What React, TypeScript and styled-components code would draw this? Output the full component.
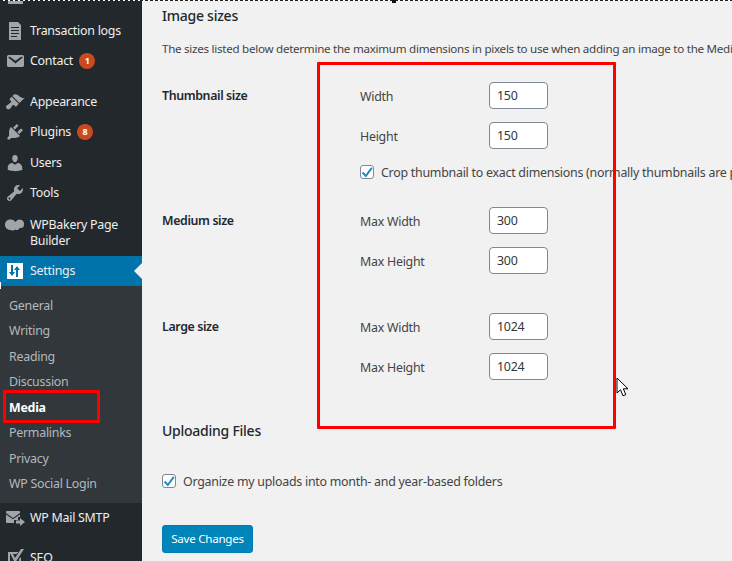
import React from "react";
import styled, { createGlobalStyle } from "styled-components";

const GlobalStyle = createGlobalStyle`
  html, body {
    margin: 0;
    padding: 0;
    height: 100%;
    overflow: hidden;
    background: #f1f1f1;
  }
  * {
    box-sizing: border-box;
  }
`;

const FONT = `"Noto Sans", "Open Sans", Arial, sans-serif`;

const Page = styled.div`
  position: relative;
  display: flex;
  width: 732px;
  height: 561px;
  overflow: hidden;
  font-family: ${FONT};
  font-size: 12.4px;
  letter-spacing: -0.25px;
  color: #444;
`;

const Sidebar = styled.nav`
  flex: 0 0 142px;
  background: #23282d;
  height: 561px;
  overflow: hidden;
`;

const MenuList = styled.div`
  margin-top: -17px;
`;

const MenuItem = styled.div<{ $active?: boolean; $gapTop?: number; $tall?: boolean; $clipped?: boolean }>`
  position: relative;
  display: flex;
  align-items: ${(p) => (p.$tall ? "flex-start" : "center")};
  gap: 5px;
  height: ${(p) => (p.$tall ? "47px" : p.$clipped ? "32.6px" : "30.6px")};
  margin-top: ${(p) => p.$gapTop ?? 0}px;
  padding: ${(p) => (p.$tall ? 8 : 0)}px 0 ${(p) => (p.$clipped ? 4 : 0)}px 5px;
  color: #eee;
  line-height: 16px;
  background: ${(p) => (p.$active ? "#0073aa" : "transparent")};
  svg {
    flex: 0 0 20px;
    fill: ${(p) => (p.$active ? "#fff" : "#a0a5aa")};
  }
`;

const MenuLabel = styled.span`
  white-space: nowrap;
`;

const Badge = styled.span`
  display: inline-flex;
  align-items: center;
  justify-content: center;
  width: 16px;
  height: 16px;
  margin-left: 6px;
  border-radius: 50%;
  background: #ca4a1f;
  color: #fff;
  font-size: 9px;
  font-weight: 700;
  vertical-align: 1px;
`;

const ActiveArrow = styled.span`
  position: absolute;
  right: 0;
  top: 50%;
  margin-top: -8px;
  border: 8px solid transparent;
  border-left-width: 0;
  border-right-color: #f1f1f1;
`;

const SubMenu = styled.div`
  background: #32373c;
  padding: 6.300px 0;
`;

const SubItem = styled.div<{ $current?: boolean }>`
  display: flex;
  align-items: center;
  height: 25.5px;
  padding-left: 9px;
  white-space: nowrap;
  color: ${(p) => (p.$current ? "#fff" : "#b4b9be")};
  font-weight: ${(p) => (p.$current ? 700 : 400)};
`;

const Main = styled.main`
  flex: 1;
  min-width: 0;
  padding: 6px 0 0 20px;
`;

const Heading = styled.h2<{ $top?: number }>`
  margin: ${(p) => p.$top ?? 0}px 0 0;
  color: #23282d;
  font-size: 14px;
  font-weight: 500;
  line-height: 20px;
`;

const Description = styled.p`
  margin: 14px 0 0;
  font-size: 11.6px;
  letter-spacing: -0.27px;
  line-height: 18px;
  white-space: nowrap;
`;

const SizeGroup = styled.section<{ $top: number }>`
  display: grid;
  grid-template-columns: 198px 1fr;
  margin-top: ${(p) => p.$top}px;
`;

const GroupTitle = styled.div`
  color: #23282d;
  font-weight: 600;
  letter-spacing: -0.38px;
  line-height: 27px;
`;

const Fields = styled.div`
  display: flex;
  flex-direction: column;
  gap: 13px;
`;

const FieldRow = styled.label`
  display: flex;
  align-items: center;
  height: 27px;
`;

const FieldName = styled.span`
  flex: 0 0 129px;
  padding-top: 1px;
`;

const NumberInput = styled.input`
  width: 59px;
  height: 27px;
  padding: 0 7px;
  border: 1px solid #7e8993;
  border-radius: 4px;
  background: #fff;
  color: #32373c;
  font: inherit;
  letter-spacing: inherit;
  outline: none;
`;

const CheckRow = styled.div<{ $top?: number }>`
  display: flex;
  align-items: center;
  gap: 7px;
  margin-top: ${(p) => p.$top ?? 0}px;
  height: 20px;
  white-space: nowrap;
`;

const CheckBox = styled.span`
  display: flex;
  align-items: center;
  justify-content: center;
  flex: 0 0 14px;
  width: 14px;
  height: 14px;
  border: 1px solid #7e8993;
  border-radius: 3px;
  background: #fff;
`;

const SaveButton = styled.button`
  display: block;
  width: 91px;
  height: 28px;
  margin-top: 34px;
  padding: 0 0 2px;
  border: 1px solid #007cb2;
  border-radius: 3px;
  background: #0085ba;
  color: #fff;
  font: inherit;
  font-size: 11.6px;
  letter-spacing: -0.25px;
`;

const Annotation = styled.div<{ $x: number; $y: number; $w: number; $h: number }>`
  position: absolute;
  left: ${(p) => p.$x}px;
  top: ${(p) => p.$y}px;
  width: ${(p) => p.$w}px;
  height: ${(p) => p.$h}px;
  border: 3px solid #f00;
  border-radius: 1px;
  pointer-events: none;
`;

const MarqueeTop = styled.div`
  position: absolute;
  left: 0;
  top: 0;
  width: 100%;
  height: 1px;
  background: repeating-linear-gradient(90deg, #222 0 3px, #fff 3px 5px);
`;

const MarqueeHandle = styled.div`
  position: absolute;
  left: 392px;
  top: 0;
  width: 4px;
  height: 3px;
  background: #111;
`;

const MarqueeSide = styled.div`
  position: absolute;
  left: 0;
  top: 282px;
  width: 1px;
  height: 7px;
  background: #fff;
`;

const Cursor = styled.svg`
  position: absolute;
  left: 616px;
  top: 377px;
`;

const Dash = ({ d }: { d: string }) => (
  <svg width="20" height="20" viewBox="0 0 20 20">
    <path d={d} />
  </svg>
);

const ICONS = {
  page: "M4 1h9l3 3v15H4zM6 6v1h8V6zm0 3v1h8V9zm0 3v1h8v-1zm0 3v1h6v-1z",
  mail: "M3.87 4h13.25C18.37 4 19 4.59 19 5.79v8.42c0 1.19-.63 1.79-1.88 1.79H3.87c-1.25 0-1.88-.6-1.88-1.79V5.79c0-1.2.63-1.79 1.88-1.79zm6.62 8.6l6.74-5.53c.24-.2.43-.66.13-1.07-.29-.41-.82-.42-1.17-.17l-5.7 3.86L4.8 5.83c-.35-.25-.88-.24-1.17.17-.3.41-.11.87.13 1.07z",
  brush: "M14.48 11.06L7.41 3.99l1.5-1.5c.5-.56 2.3-.47 3.51.32 1.21.8 1.43 1.28 2.91 2.1 1.18.64 2.45 1.26 4.45.85zm-.71.71L6.7 4.7 4.93 6.47c-.39.39-.39 1.02 0 1.41l1.06 1.06c.39.39.39 1.03 0 1.42-.6.6-1.43 1.11-2.21 1.69-.35.26-.7.53-1.01.84C1.43 13.23 1 14.11 1 15c0 .89.43 1.77 1.77 2.23.89.3 1.77-.13 2.42-.78.31-.31.58-.66.84-1.01.58-.78 1.09-1.61 1.69-2.21.39-.39 1.03-.39 1.42 0l1.06 1.06c.39.39 1.02.39 1.41 0z",
  plug: "M13.11 4.36L9.87 7.6 8 5.73l3.24-3.24c.35-.34 1.05-.2 1.56.32.52.51.66 1.21.31 1.55zm-8 1.77l.91-1.12 9.01 9.01-1.19.84c-.71.71-2.63 1.16-3.82 1.16H6.14L4.9 17.26c-.59.59-1.54.59-2.12 0-.59-.58-.59-1.53 0-2.12l1.24-1.24v-3.88c0-1.13.4-3.19 1.09-3.89zm7.26 3.97l3.24-3.24c.34-.35 1.04-.21 1.55.31.52.51.66 1.21.31 1.55l-3.24 3.25z",
  user: "M10 9.25c-2.27 0-2.73-3.44-2.73-3.44C7 4.02 7.82 2 9.97 2c2.16 0 2.98 2.02 2.71 3.81 0 0-.41 3.44-2.68 3.44zm0 2.57L12.72 10c2.39 0 4.52 2.33 4.52 4.53v2.49s-3.65 1.13-7.24 1.13c-3.65 0-7.24-1.13-7.24-1.13v-2.49c0-2.25 1.94-4.48 4.47-4.48z",
  wrench: "M16.68 9.77c-1.34 1.34-3.3 1.67-4.95.99l-5.41 6.52c-.99.99-2.59.99-3.58 0s-.99-2.59 0-3.57l6.52-5.42c-.68-1.65-.35-3.61.99-4.95 1.28-1.28 3.12-1.62 4.72-1.06l-2.89 2.89 2.82 2.82 2.86-2.87c.53 1.58.18 3.39-1.08 4.65zM3.81 16.21c.4.39 1.04.39 1.43 0 .4-.4.4-1.04 0-1.43-.39-.4-1.03-.4-1.43 0-.39.39-.39 1.03 0 1.43z",
  cloud: "M5.500 2.500a5 5 0 0 1 5 2.500a4.500 4.500 0 0 1 8.500 2.500a3.500 3.500 0 0 1-3.500 3.500h-1a2.500 2.500 0 0 1-4 1.500a4 4 0 0 1-4.500.5C3 13 0 11 0 8a5 5 0 0 1 5.500-5.500z",
  settings: "M2 2h16v16H2zm4 2v7H4l3 4 3-4H8V4zm7 12v-7h2l-3-4-3 4h2v7z",
  smtp: "M2 3h12c.8 0 1 .5 1 1v1L8 10 1 5V4c0-.5.3-1 1-1zm-1 3.500l7 4.800 7-4.800V9h-2v3H9v3H2c-.7 0-1-.5-1-1zM15 10l5 4-5 4v-2.500h-4v-3h4z",
  seo: "M3 4h10.500l-2 2H5v9h9v-4l2-2v8H3zm5 2l2 4 6-9h3l-9 14-4.500-9z",
};

const Checkmark = () => (
  <svg width="12" height="12" viewBox="0 0 12 12">
    <path d="M1.500 6.500 4.800 10 10.800 1.800" fill="none" stroke="#1e8cbe" strokeWidth="2" />
  </svg>
);

const SUB_ITEMS = ["General", "Writing", "Reading", "Discussion", "Media", "Permalinks", "Privacy", "WP Social Login"];

const App: React.FC = () => {
  return (
    <>
      <GlobalStyle />
      <Page>
        <Sidebar>
          <MenuList>
            <MenuItem $clipped>
              <Dash d="M2 3h17v4H2zm1 6h15v8H3z" />
              <MenuLabel>Invoices</MenuLabel>
            </MenuItem>
            <MenuItem>
              <Dash d={ICONS.page} />
              <MenuLabel>Transaction logs</MenuLabel>
            </MenuItem>
            <MenuItem>
              <Dash d={ICONS.mail} />
              <MenuLabel>
                Contact<Badge>1</Badge>
              </MenuLabel>
            </MenuItem>
            <MenuItem $gapTop={9.6}>
              <Dash d={ICONS.brush} />
              <MenuLabel>Appearance</MenuLabel>
            </MenuItem>
            <MenuItem>
              <Dash d={ICONS.plug} />
              <MenuLabel>
                Plugins<Badge>8</Badge>
              </MenuLabel>
            </MenuItem>
            <MenuItem>
              <Dash d={ICONS.user} />
              <MenuLabel>Users</MenuLabel>
            </MenuItem>
            <MenuItem>
              <Dash d={ICONS.wrench} />
              <MenuLabel>Tools</MenuLabel>
            </MenuItem>
            <MenuItem $tall>
              <Dash d={ICONS.cloud} />
              <MenuLabel>
                WPBakery Page
                <br />
                Builder
              </MenuLabel>
            </MenuItem>
            <MenuItem $active>
              <Dash d={ICONS.settings} />
              <MenuLabel>Settings</MenuLabel>
              <ActiveArrow />
            </MenuItem>
            <SubMenu>
              {SUB_ITEMS.map((item) => (
                <SubItem key={item} $current={item === "Media"}>
                  {item}
                </SubItem>
              ))}
            </SubMenu>
            <MenuItem>
              <Dash d={ICONS.smtp} />
              <MenuLabel>WP Mail SMTP</MenuLabel>
            </MenuItem>
            <MenuItem $gapTop={9.4}>
              <Dash d={ICONS.seo} />
              <MenuLabel>SEO</MenuLabel>
            </MenuItem>
          </MenuList>
        </Sidebar>

        <Main>
          <Heading>Image sizes</Heading>
          <Description>
            The sizes listed below determine the maximum dimensions in pixels to use when adding an image to the Media
            Library.
          </Description>

          <SizeGroup $top={24}>
            <GroupTitle>Thumbnail size</GroupTitle>
            <Fields>
              <FieldRow>
                <FieldName>Width</FieldName>
                <NumberInput defaultValue="150" />
              </FieldRow>
              <FieldRow>
                <FieldName>Height</FieldName>
                <NumberInput defaultValue="150" />
              </FieldRow>
              <CheckRow>
                <CheckBox>
                  <Checkmark />
                </CheckBox>
                Crop thumbnail to exact dimensions (normally thumbnails are proportional)
              </CheckRow>
            </Fields>
          </SizeGroup>

          <SizeGroup $top={25}>
            <GroupTitle>Medium size</GroupTitle>
            <Fields>
              <FieldRow>
                <FieldName>Max Width</FieldName>
                <NumberInput defaultValue="300" />
              </FieldRow>
              <FieldRow>
                <FieldName>Max Height</FieldName>
                <NumberInput defaultValue="300" />
              </FieldRow>
            </Fields>
          </SizeGroup>

          <SizeGroup $top={39}>
            <GroupTitle>Large size</GroupTitle>
            <Fields>
              <FieldRow>
                <FieldName>Max Width</FieldName>
                <NumberInput defaultValue="1024" />
              </FieldRow>
              <FieldRow>
                <FieldName>Max Height</FieldName>
                <NumberInput defaultValue="1024" />
              </FieldRow>
            </Fields>
          </SizeGroup>

          <Heading $top={41}>Uploading Files</Heading>
          <CheckRow $top={30}>
            <CheckBox>
              <Checkmark />
            </CheckBox>
            Organize my uploads into month- and year-based folders
          </CheckRow>
          <SaveButton>Save Changes</SaveButton>
        </Main>

        <Annotation $x={317} $y={62} $w={299} $h={367} />
        <Annotation $x={3} $y={390} $w={97} $h={33} />
        <MarqueeTop />
        <MarqueeHandle />
        <MarqueeSide />
        <Cursor width="14" height="21" viewBox="0 0 14 21">
          <path d="M1 1v15l3.500-3.200 2.500 6 2.800-1.200-2.500-5.800H12z" fill="#fff" stroke="#000" strokeWidth="1" />
        </Cursor>
      </Page>
    </>
  );
};

export default App;
